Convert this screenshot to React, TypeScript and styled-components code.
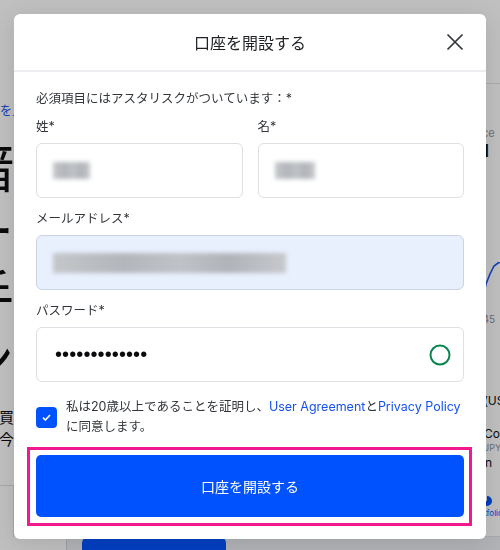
import React from "react";
import styled, { createGlobalStyle } from "styled-components";

const GlobalStyle = createGlobalStyle`
  html, body {
    margin: 0;
    padding: 0;
    background: #ffffff;
  }
  body {
    font-family: "Inter", "Noto Sans CJK JP", sans-serif;
  }
`;

const Page = styled.div`
  width: 500px;
  height: 550px;
  background: #ffffff;
  display: flex;
  flex-direction: column;
  overflow: hidden;
`;

const Main = styled.div`
  display: flex;
  height: 537px;
`;

const HeroClip = styled.div`
  width: 14px;
  flex-shrink: 0;
  overflow: hidden;
  display: flex;
  flex-direction: column;
  padding-top: 103px;
  color: #0a0b0d;
`;

const ClipLine = styled.div<{ $size: number; $lh: number; $color?: string; $mt?: number; $spill?: number }>`
  display: flex;
  justify-content: flex-end;
  white-space: nowrap;
  font-size: ${({ $size }) => $size}px;
  line-height: ${({ $lh }) => $lh}px;
  color: ${({ $color }) => $color || "#0a0b0d"};
  margin-top: ${({ $mt }) => $mt || 0}px;
  margin-right: ${({ $spill }) => -($spill || 0)}px;
`;

const HeroRule = styled.div`
  margin-top: 34px;
  height: 65px;
  border-top: 1px solid #dcdfe3;
  border-right: 1px solid #dcdfe3;
`;

const Spacer = styled.div`
  flex: 1;
`;

const SideCard = styled.div`
  width: 40px;
  flex-shrink: 0;
  margin-top: 83px;
  height: 454px;
  box-sizing: border-box;
  border: 1px solid #e1e3e7;
  border-right: none;
  border-radius: 12px 0 0 12px;
  padding: 42px 0 0 7px;
  display: flex;
  flex-direction: column;
  overflow: hidden;
  white-space: nowrap;
  background: #ffffff;
`;

const CardText = styled.div<{ $size: number; $lh: number; $color?: string; $weight?: number; $mt?: number; $track?: number }>`
  font-size: ${({ $size }) => $size}px;
  line-height: ${({ $lh }) => $lh}px;
  color: ${({ $color }) => $color || "#0a0b0d"};
  font-weight: ${({ $weight }) => $weight || 400};
  margin-top: ${({ $mt }) => $mt || 0}px;
  letter-spacing: ${({ $track }) => $track || 0}px;
`;

const Chart = styled.svg`
  margin-top: 100px;
  display: block;
`;

const AssetRow = styled.div`
  display: flex;
  gap: 4px;
  margin-top: 17px;
  align-items: flex-start;
`;

const AssetDot = styled.div`
  width: 12px;
  height: 12px;
  border-radius: 50%;
  background: #2775ca;
  margin-top: 2px;
  flex-shrink: 0;
`;

const AssetNames = styled.div`
  display: flex;
  flex-direction: column;
`;

const NavItem = styled.div`
  margin-top: 25px;
  display: flex;
  flex-direction: column;
  align-items: center;
  width: 38px;
  gap: 2px;
  color: #0052ff;
  font-size: 8px;
  line-height: 10px;
`;

const Footer = styled.div`
  flex: 1;
  display: flex;
  background: #eceef1;
`;

const FooterBox = styled.div`
  width: 66px;
  background: #ffffff;
  border-right: 1px solid #d3d6da;
`;

const FooterButton = styled.div`
  width: 144px;
  margin-left: 15px;
  background: #0052ff;
  border-radius: 6px 6px 0 0;
`;

const Overlay = styled.div`
  position: fixed;
  inset: 0;
  background: rgba(10, 11, 16, 0.26);
  display: flex;
  justify-content: center;
  align-items: flex-start;
  padding-top: 14px;
`;

const Modal = styled.div`
  width: 472px;
  background: #ffffff;
  border-radius: 6px;
  box-shadow: 0 4px 24px rgba(0, 0, 0, 0.12);
  display: flex;
  flex-direction: column;
`;

const Header = styled.div`
  height: 56px;
  display: grid;
  grid-template-columns: 1fr auto 1fr;
  align-items: center;
  padding: 0 22px;
  border-bottom: 2px solid #eceef1;
`;

const Title = styled.div`
  grid-column: 2;
  font-size: 16px;
  color: #1e2125;
`;

const CloseButton = styled.button`
  grid-column: 3;
  justify-self: end;
  width: 18px;
  height: 18px;
  padding: 0;
  border: none;
  background: none;
  display: flex;
  align-items: center;
  justify-content: center;
  cursor: pointer;
`;

const Body = styled.div`
  padding: 18px 22px 13px;
  display: flex;
  flex-direction: column;
`;

const Note = styled.div`
  font-size: 12.5px;
  line-height: 18px;
  color: #32363b;
`;

const NameRow = styled.div`
  display: grid;
  grid-template-columns: 1fr 1fr;
  gap: 15px;
  margin-top: 10px;
`;

const Field = styled.div<{ $mt?: number }>`
  display: flex;
  flex-direction: column;
  gap: 7px;
  margin-top: ${({ $mt }) => $mt || 0}px;
`;

const Label = styled.label`
  font-size: 12.5px;
  line-height: 18px;
  color: #32363b;
`;

const InputBox = styled.div<{ $filled?: boolean }>`
  height: 55px;
  box-sizing: border-box;
  border: 1px solid ${({ $filled }) => ($filled ? "#cbd4e4" : "#dcdfe4")};
  background: ${({ $filled }) => ($filled ? "#e8f0fe" : "#ffffff")};
  border-radius: 6px;
  display: flex;
  align-items: center;
  justify-content: space-between;
  padding: 0 12px 0 16px;
`;

const Blurred = styled.span<{ $w: number; $h: number }>`
  display: inline-block;
  width: ${({ $w }) => $w}px;
  height: ${({ $h }) => $h}px;
  background: linear-gradient(
    90deg,
    #c4c6ca 0%,
    #b3b6ba 30%,
    #bfc2c6 55%,
    #b0b3b8 75%,
    #c6c8cc 100%
  );
  filter: blur(2px);
`;

const Dots = styled.span`
  font-family: "Liberation Sans", sans-serif;
  font-size: 20px;
  letter-spacing: 0.1px;
  color: #0a0b0d;
  padding-left: 2px;
`;

const CheckRow = styled.div`
  display: flex;
  align-items: center;
  gap: 9px;
  margin-top: 15px;
`;

const CheckBox = styled.div`
  width: 21px;
  height: 21px;
  flex-shrink: 0;
  border-radius: 4px;
  background: #0052ff;
  display: flex;
  align-items: center;
  justify-content: center;
`;

const CheckText = styled.div`
  font-size: 12.5px;
  line-height: 20px;
  color: #32363b;
  white-space: nowrap;
`;

const Link = styled.a`
  color: #1652f0;
  text-decoration: none;
`;

const Highlight = styled.div`
  margin: 10px -8px 0 -9px;
  border: 3px solid #f2188d;
  padding: 5px 5px 6px 6px;
`;

const SubmitButton = styled.button`
  width: 100%;
  height: 62px;
  border: none;
  border-radius: 5px;
  background: #0052ff;
  color: #ffffff;
  font-family: "Inter", "Noto Sans CJK JP", sans-serif;
  font-size: 14px;
  cursor: pointer;
`;

const App: React.FC = () => {
  return (
    <>
      <GlobalStyle />
      <Page>
        <Main>
          <HeroClip>
            <ClipLine $size={12} $lh={16} $color="#1652f0" $spill={10}>
              詳しくはこちらを見
            </ClipLine>
            <ClipLine $size={54} $lh={64} $mt={18}>
              暗
            </ClipLine>
            <ClipLine $size={54} $lh={64}>
              ー
            </ClipLine>
            <ClipLine $size={54} $lh={64}>
              手
            </ClipLine>
            <ClipLine $size={54} $lh={64}>
              ン
            </ClipLine>
            <ClipLine $size={15} $lh={22} $mt={14}>
              暗号資産の売買
            </ClipLine>
            <ClipLine $size={15} $lh={22}>
              今
            </ClipLine>
            <HeroRule />
          </HeroClip>
          <Spacer />
          <SideCard>
            <CardText $size={11} $lh={14} $color="#8a919e">
              Price
            </CardText>
            <CardText $size={18} $lh={22} $weight={700} $track={3}>
              ¥1
            </CardText>
            <Chart width="34" height="46" viewBox="0 0 34 46">
              <polyline
                points="0,46 12,45 14,40 18,22 22,12 26,4 30,1 34,0"
                fill="none"
                stroke="#1652f0"
                strokeWidth="1.6"
              />
            </Chart>
            <CardText $size={10} $lh={12} $color="#8a919e" $mt={5}>
              ¥0.45
            </CardText>
            <CardText $size={12} $lh={16} $mt={68}>
              円 (USD)
            </CardText>
            <AssetRow>
              <AssetDot />
              <AssetNames>
                <CardText $size={12} $lh={16}>
                  Coin
                </CardText>
                <CardText $size={9} $lh={12} $color="#8a919e">
                  JPY
                </CardText>
              </AssetNames>
            </AssetRow>
            <CardText $size={12} $lh={16} $mt={1}>
              Join
            </CardText>
            <NavItem>
              <svg width="10" height="10" viewBox="0 0 10 10">
                <path d="M5 0 A5 5 0 1 1 0 5 L5 5 Z" fill="#0052ff" />
                <path d="M4 0 A4.5 4.5 0 0 0 0 4 L4 4 Z" fill="#0052ff" />
              </svg>
              <span>Portfolio</span>
            </NavItem>
          </SideCard>
        </Main>
        <Footer>
          <FooterBox />
          <FooterButton />
        </Footer>
      </Page>

      <Overlay>
        <Modal>
          <Header>
            <Title>口座を開設する</Title>
            <CloseButton aria-label="閉じる">
              <svg width="18" height="18" viewBox="0 0 18 18">
                <path d="M1.5 1.5 L16.5 16.5 M16.5 1.5 L1.5 16.5" stroke="#32353a" strokeWidth="1.7" />
              </svg>
            </CloseButton>
          </Header>
          <Body>
            <Note>必須項目にはアスタリスクがついています：*</Note>
            <NameRow>
              <Field>
                <Label>姓*</Label>
                <InputBox>
                  <Blurred $w={37} $h={17} />
                </InputBox>
              </Field>
              <Field>
                <Label>名*</Label>
                <InputBox>
                  <Blurred $w={40} $h={17} />
                </InputBox>
              </Field>
            </NameRow>
            <Field $mt={12}>
              <Label>メールアドレス*</Label>
              <InputBox $filled>
                <Blurred $w={233} $h={20} />
              </InputBox>
            </Field>
            <Field $mt={12}>
              <Label>パスワード*</Label>
              <InputBox>
                <Dots>•••••••••••••</Dots>
                <svg width="22" height="22" viewBox="0 0 22 22">
                  <circle cx="11" cy="11" r="9.5" fill="none" stroke="#098551" strokeWidth="2" />
                </svg>
              </InputBox>
            </Field>
            <CheckRow>
              <CheckBox>
                <svg width="9" height="7" viewBox="0 0 9 7">
                  <path d="M1 3.6 L3.4 6 L8 1" fill="none" stroke="#ffffff" strokeWidth="1.6" />
                </svg>
              </CheckBox>
              <CheckText>
                私は20歳以上であることを証明し、<Link href="#">User Agreement</Link>と
                <Link href="#">Privacy Policy</Link>
                <br />
                に同意します。
              </CheckText>
            </CheckRow>
            <Highlight>
              <SubmitButton>口座を開設する</SubmitButton>
            </Highlight>
          </Body>
        </Modal>
      </Overlay>
    </>
  );
};

export default App;
